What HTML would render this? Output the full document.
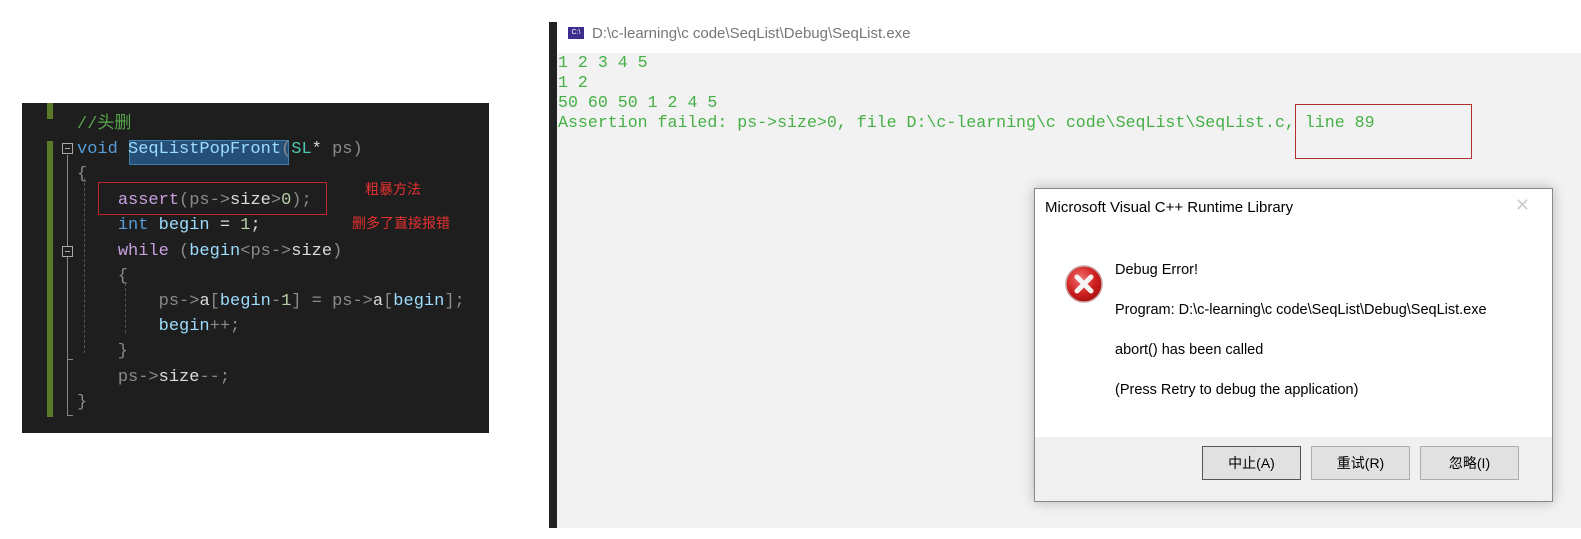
<!DOCTYPE html>
<html><head><meta charset="utf-8"><style>
body{margin:0;width:1581px;height:539px;background:#fff;position:relative;overflow:hidden;font-family:"Liberation Sans","Noto Sans CJK SC",sans-serif}
.abs{position:absolute}
#code{left:22px;top:103px;width:467px;height:330px;background:#1e1e1e}
.ln{position:absolute;left:0;font-family:"Liberation Mono","Noto Sans CJK SC",monospace;font-size:17px;white-space:pre;color:#dcdcdc;line-height:20px}
.k{color:#569cd6}.p{color:#9cdcfe}.g{color:#8a8a8a}.f{color:#dcdcaa}.m{color:#c8a0e0}.t{color:#4ec9b0}.c{color:#57a64a}.n{color:#b5cea8}
.con{font-family:"Liberation Mono","Noto Sans CJK SC",monospace;font-size:16.6px;color:#45b045;white-space:pre;line-height:20px;left:558px}
.btn{position:absolute;width:99px;height:34px;background:#e1e1e1;border:1px solid #adadad;box-sizing:border-box;font-size:14px;color:#000;text-align:center;line-height:32px;font-family:"Liberation Sans","Noto Sans CJK SC",sans-serif}
.dt{position:absolute;left:80px;font-size:14.5px;color:#000}
</style></head><body>
<div id="code" class="abs">
 <div class="abs" style="left:25px;top:0;width:6px;height:16px;background:#5a7a2a"></div>
 <div class="abs" style="left:25px;top:38px;width:6px;height:276px;background:#5a7a2a"></div>
 <div class="abs" style="left:40px;top:40px;width:11px;height:11px;border:1px solid #aaa;box-sizing:border-box"></div>
 <div class="abs" style="left:43px;top:45px;width:5px;height:1px;background:#aaa"></div>
 <div class="abs" style="left:45px;top:52px;width:1px;height:260px;background:#888"></div>
 <div class="abs" style="left:45px;top:312px;width:6px;height:1px;background:#888"></div>
 <div class="abs" style="left:40px;top:143px;width:11px;height:11px;border:1px solid #aaa;box-sizing:border-box;background:#1e1e1e"></div>
 <div class="abs" style="left:43px;top:148px;width:5px;height:1px;background:#aaa"></div>
 <div class="abs" style="left:45px;top:256px;width:6px;height:1px;background:#888"></div>
 <div class="abs" style="left:62px;top:75px;width:0;height:175px;border-left:1px dashed #555"></div>
 <div class="abs" style="left:103px;top:180px;width:0;height:50px;border-left:1px dashed #555"></div>
 <div class="abs" style="left:107px;top:37px;width:160px;height:25px;background:#264f78;border:1px solid #3c7fb1;box-sizing:border-box"></div>
 <div class="ln c" style="left:55px;top:12px">//头删</div>
 <div class="ln" style="left:55px;top:37px"><span class="k">void</span> <span class="p">SeqListPopFront</span><span class="g">(</span><span class="t">SL</span>* <span class="g">ps)</span></div>
 <div class="ln g" style="left:55px;top:62px">{</div>
 <div class="ln" style="left:55px;top:88px">    <span class="m">assert</span><span class="g">(ps-&gt;</span>size<span class="g">&gt;</span><span class="n">0</span><span class="g">);</span></div>
 <div class="ln" style="left:55px;top:113px">    <span class="k">int</span> <span class="p">begin</span> = <span class="n">1</span>;</div>
 <div class="ln" style="left:55px;top:139px">    <span class="m">while</span> <span class="g">(</span><span class="p">begin</span><span class="g">&lt;ps-&gt;</span>size<span class="g">)</span></div>
 <div class="ln g" style="left:55px;top:164px">    {</div>
 <div class="ln" style="left:55px;top:189px">        <span class="g">ps-&gt;</span>a<span class="g">[</span><span class="p">begin</span><span class="g">-</span><span class="n">1</span><span class="g">] = ps-&gt;</span>a<span class="g">[</span><span class="p">begin</span><span class="g">];</span></div>
 <div class="ln" style="left:55px;top:214px">        <span class="p">begin</span><span class="g">++;</span></div>
 <div class="ln g" style="left:55px;top:239px">    }</div>
 <div class="ln" style="left:55px;top:265px">    <span class="g">ps-&gt;</span>size<span class="g">--;</span></div>
 <div class="ln g" style="left:55px;top:290px">}</div>
 <div class="abs" style="left:76px;top:79px;width:229px;height:33px;border:1px solid #c0282d;box-sizing:border-box"></div>
 <div class="abs" style="left:343px;top:76px;color:#e53030;font-size:14px">粗暴方法</div>
 <div class="abs" style="left:330px;top:110px;color:#e53030;font-size:14px">删多了直接报错</div>
</div>
<div class="abs" style="left:549px;top:22px;width:8px;height:506px;background:#222"></div>
<div class="abs" style="left:557px;top:53px;width:1024px;height:475px;background:#f2f2f2"></div>
<div class="abs" style="left:568px;top:27px;width:16px;height:12px;background:#3b2e8f;color:#fff;font-size:7px;line-height:12px;text-align:center">C:\</div>
<div class="abs" style="left:592px;top:25px;font-size:15px;color:#777">D:\c-learning\c code\SeqList\Debug\SeqList.exe</div>
<div class="abs con" style="top:53px">1 2 3 4 5</div>
<div class="abs con" style="top:73px">1 2</div>
<div class="abs con" style="top:93px">50 60 50 1 2 4 5</div>
<div class="abs con" style="top:113px">Assertion failed: ps-&gt;size&gt;0, file D:\c-learning\c code\SeqList\SeqList.c, line 89</div>
<div class="abs" style="left:1295px;top:104px;width:177px;height:55px;border:1px solid #b03030;box-sizing:border-box"></div>
<div class="abs" style="left:1034px;top:188px;width:519px;height:314px;background:#fff;border:1px solid #888;box-sizing:border-box;box-shadow:0 0 12px rgba(0,0,0,.25)">
 <div class="abs" style="left:10px;top:10px;font-size:15px;color:#000">Microsoft Visual C++ Runtime Library</div>
 <div class="abs" style="right:22px;top:6px;font-size:18px;color:#ccc">✕</div>
 <svg class="abs" style="left:29px;top:75px" width="40" height="40" viewBox="0 0 40 40"><defs><radialGradient id="r" cx="40%" cy="35%" r="70%"><stop offset="0" stop-color="#f07070"/><stop offset=".6" stop-color="#d02020"/><stop offset="1" stop-color="#a01010"/></radialGradient></defs><circle cx="20" cy="20" r="18" fill="url(#r)" stroke="#c8a0a0" stroke-width="1.5"/><path d="M13 13L27 27M27 13L13 27" stroke="#f4f4f4" stroke-width="5" stroke-linecap="round"/></svg>
 <div class="dt" style="top:73px">Debug Error!</div>
 <div class="dt" style="top:113px">Program: D:\c-learning\c code\SeqList\Debug\SeqList.exe</div>
 <div class="dt" style="top:153px">abort() has been called</div>
 <div class="dt" style="top:193px">(Press Retry to debug the application)</div>
 <div class="abs" style="left:0;top:248px;width:517px;height:64px;background:#f0f0f0"></div>
 <div class="btn" style="left:167px;top:257px;border:1px solid #555">中止(A)</div>
 <div class="btn" style="left:276px;top:257px">重试(R)</div>
 <div class="btn" style="left:385px;top:257px">忽略(I)</div>
</div>
</body></html>
